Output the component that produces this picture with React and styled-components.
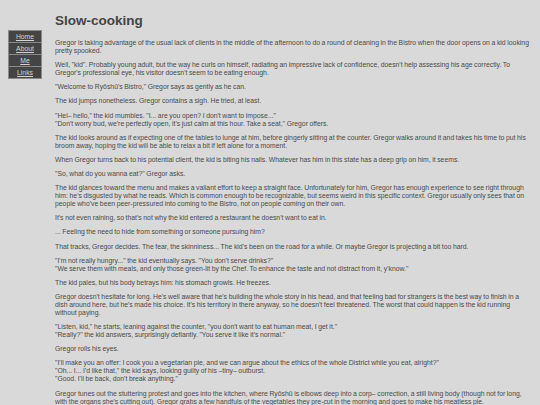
import React from "react";
import styled, { createGlobalStyle } from "styled-components";

const GlobalStyle = createGlobalStyle`
  html, body {
    margin: 0;
    background: #d9d9d9;
  }
  body {
    padding: 8px;
    font-family: "Liberation Sans", Arial, sans-serif;
    color: #4a4a4a;
  }
`;

const Page = styled.div`
  display: flex;
  align-items: flex-start;
`;

const Nav = styled.nav`
  width: 34px;
  margin-top: 22px;
  flex-shrink: 0;
  background: #8a8a8a;
  padding: 1px;
  box-sizing: border-box;
  display: flex;
  flex-direction: column;
  gap: 1px;
`;

const NavLink = styled.a`
  display: block;
  background: #444;
  color: #d4d4d4;
  font-size: 6.8px;
  line-height: 11px;
  text-align: center;
  text-decoration: underline;
`;

const Main = styled.main`
  flex: 1;
  margin-left: 13px;
`;

const Title = styled.h1`
  font-size: 13.5px;
  line-height: 16px;
  margin: 5px 0 10px;
  color: #444;
`;

const Para = styled.p`
  font-size: 6.85px;
  line-height: 8px;
  word-spacing: -0.3px;
  margin: 0 0 6.15px;
`;

const paragraphs = [
  ["Gregor is taking advantage of the usual lack of clients in the middle of the afternoon to do a round of cleaning in the Bistro when the door opens on a kid looking pretty spooked."],
  ["Well, \"kid\". Probably young adult, but the way he curls on himself, radiating an impressive lack of confidence, doesn't help assessing his age correctly. To Gregor's professional eye, his visitor doesn't seem to be eating enough."],
  ["\"Welcome to Ryōshū's Bistro,\" Gregor says as gently as he can."],
  ["The kid jumps nonetheless. Gregor contains a sigh. He tried, at least."],
  [
    "\"Hel– hello,\" the kid mumbles. \"I... are you open? I don't want to impose...\"",
    "\"Don't worry bud, we're perfectly open, it's just calm at this hour. Take a seat,\" Gregor offers.",
  ],
  ["The kid looks around as if expecting one of the tables to lunge at him, before gingerly sitting at the counter. Gregor walks around it and takes his time to put his broom away, hoping the kid will be able to relax a bit if left alone for a moment."],
  ["When Gregor turns back to his potential client, the kid is biting his nails. Whatever has him in this state has a deep grip on him, it seems."],
  ["\"So, what do you wanna eat?\" Gregor asks."],
  ["The kid glances toward the menu and makes a valiant effort to keep a straight face. Unfortunately for him, Gregor has enough experience to see right through him: he's disgusted by what he reads. Which is common enough to be recognizable, but seems weird in this specific context. Gregor usually only sees that on people who've been peer-pressured into coming to the Bistro, not on people coming on their own."],
  ["It's not even raining, so that's not why the kid entered a restaurant he doesn't want to eat in."],
  ["... Feeling the need to hide from something or someone pursuing him?"],
  ["That tracks, Gregor decides. The fear, the skinniness... The kid's been on the road for a while. Or maybe Gregor is projecting a bit too hard."],
  [
    "\"I'm not really hungry...\" the kid eventually says. \"You don't serve drinks?\"",
    "\"We serve them with meals, and only those green-lit by the Chef. To enhance the taste and not distract from it, y'know.\"",
  ],
  ["The kid pales, but his body betrays him: his stomach growls. He freezes."],
  ["Gregor doesn't hesitate for long. He's well aware that he's building the whole story in his head, and that feeling bad for strangers is the best way to finish in a dish around here, but he's made his choice. It's his territory in there anyway, so he doesn't feel threatened. The worst that could happen is the kid running without paying."],
  [
    "\"Listen, kid,\" he starts, leaning against the counter, \"you don't want to eat human meat, I get it.\"",
    "\"Really?\" the kid answers, surprisingly defiantly. \"You serve it like it's normal.\"",
  ],
  ["Gregor rolls his eyes."],
  [
    "\"I'll make you an offer: I cook you a vegetarian pie, and we can argue about the ethics of the whole District while you eat, alright?\"",
    "\"Oh... I... I'd like that,\" the kid says, looking guilty of his –tiny– outburst.",
    "\"Good. I'll be back, don't break anything.\"",
  ],
  ["Gregor tunes out the stuttering protest and goes into the kitchen, where Ryōshū is elbows deep into a corp– correction, a still living body (though not for long, with the organs she's cutting out). Gregor grabs a few handfuls of the vegetables they pre-cut in the morning and goes to make his meatless pie."],
];

const links = ["Home", "About", "Me", "Links"];

export default function App() {
  return (
    <>
      <GlobalStyle />
      <Page>
        <Nav>
          {links.map((l) => (
            <NavLink key={l} href="#">
              {l}
            </NavLink>
          ))}
        </Nav>
        <Main>
          <Title>Slow-cooking</Title>
          {paragraphs.map((lines, i) => (
            <Para key={i}>
              {lines.map((line, j) => (
                <React.Fragment key={j}>
                  {j > 0 && <br />}
                  {line}
                </React.Fragment>
              ))}
            </Para>
          ))}
        </Main>
      </Page>
    </>
  );
}
